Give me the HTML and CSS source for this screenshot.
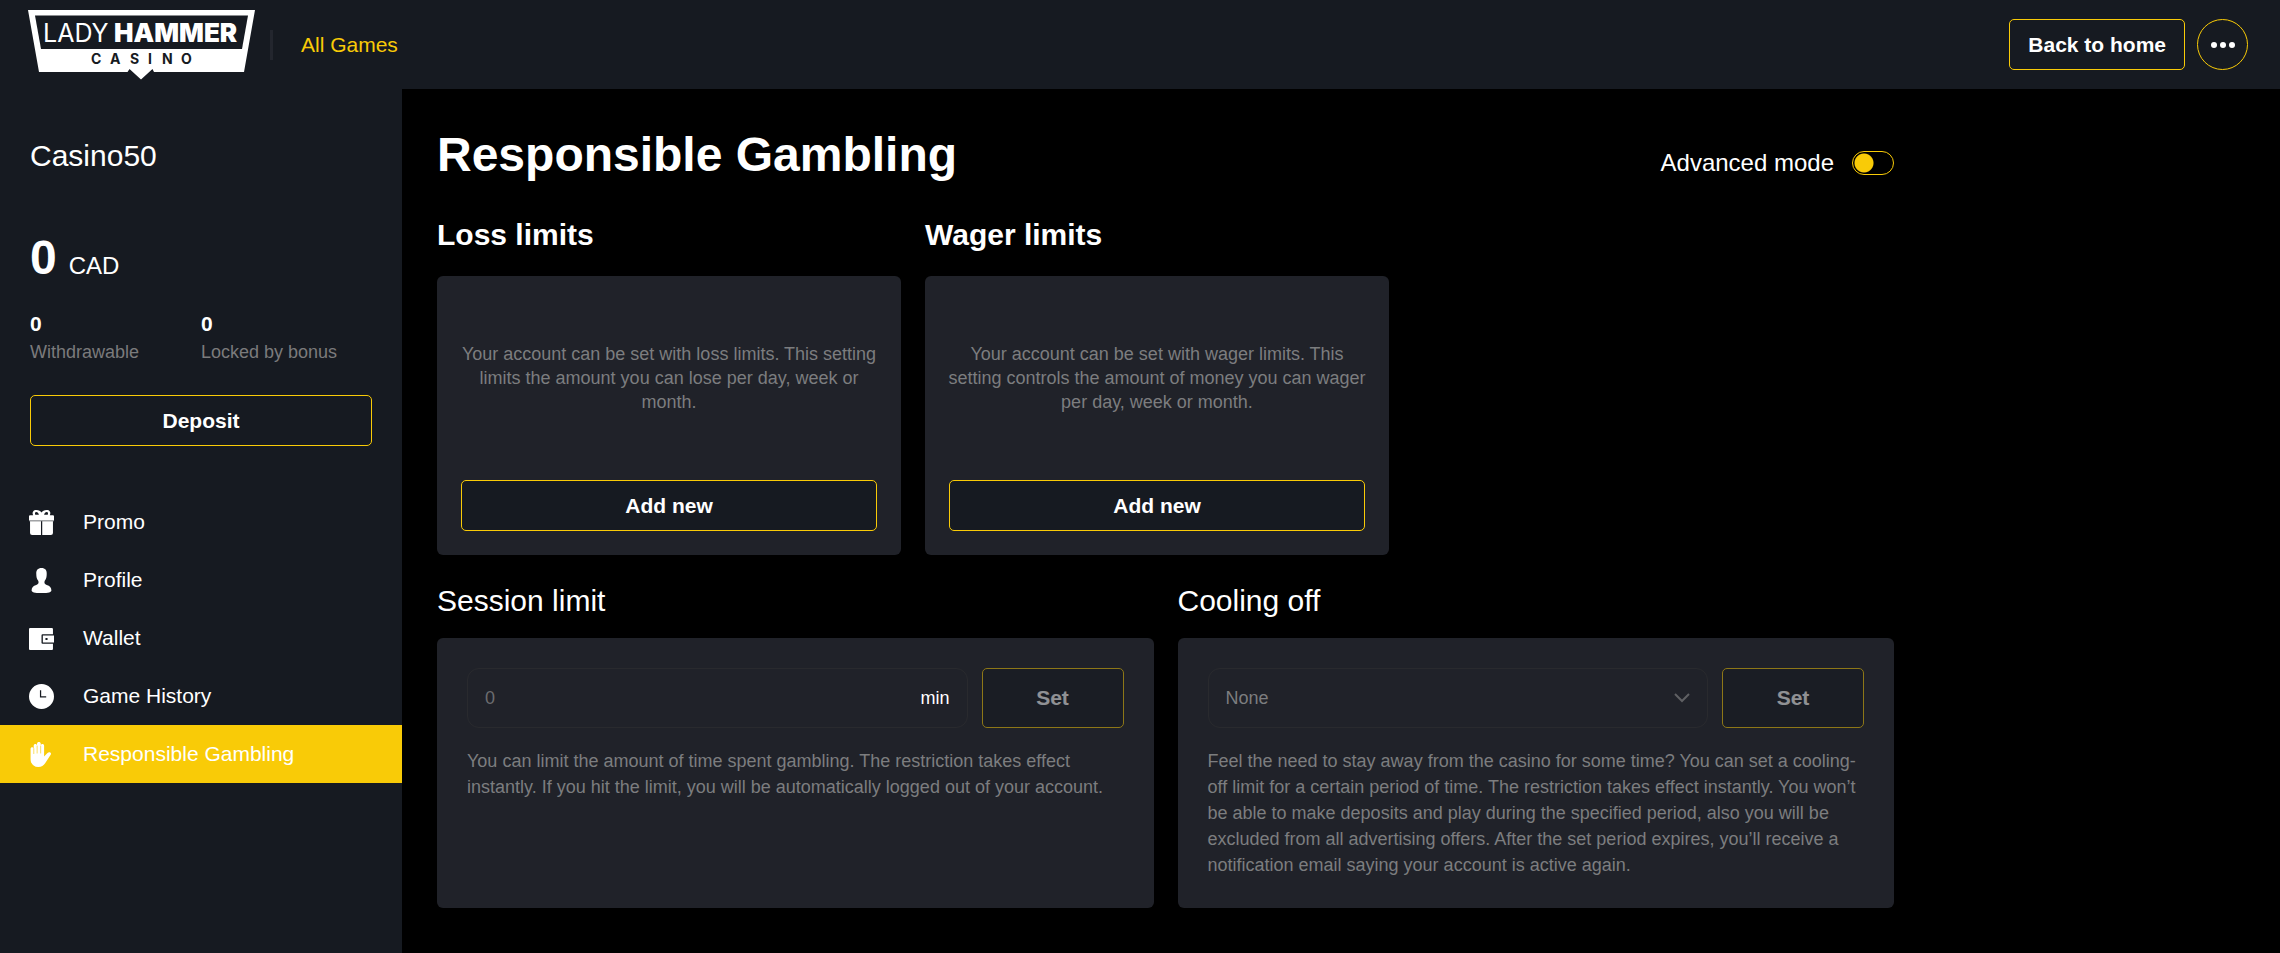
FILE: index.html
```html
<!DOCTYPE html>
<html lang="en">
<head>
  <meta charset="UTF-8">
  <title>Responsible Gambling – Lady Hammer Casino</title>
  <meta name="viewport" content="width=device-width, initial-scale=1.0">
  <link rel="stylesheet" href="styles.css">
</head>
<body>

  <!-- Header -->
  <header class="header">
    <a href="#" class="logo" aria-label="Lady Hammer Casino">
      <svg width="227" height="70" viewBox="0 0 227 70">
        <path fill="#fff" d="M0 0H227L216 62H126L124.500 59L113 69.500L101.500 59L99.500 62H11Z"/>
        <path fill="#161a21" d="M7 5.500H220L214 39H13Z"/>
        <text class="logo-light" x="15" y="32">LADY</text>
        <text class="logo-bold" x="86" y="32">HAMMER</text>
        <text class="logo-sub" x="63" y="54">C</text>
        <text class="logo-sub" x="82" y="54">A</text>
        <text class="logo-sub" x="102" y="54">S</text>
        <text class="logo-sub" x="120" y="54">I</text>
        <text class="logo-sub" x="134" y="54">N</text>
        <text class="logo-sub" x="153" y="54">O</text>
      </svg>
    </a>
    <nav class="top-nav">
      <a href="#">All Games</a>
    </nav>
    <div class="header-actions">
      <button class="btn" type="button">Back to home</button>
      <button class="btn btn-round" type="button" aria-label="More">
        <svg width="24" height="6" viewBox="0 0 24 6" fill="#fff">
          <circle cx="3" cy="3" r="3"/><circle cx="12" cy="3" r="3"/><circle cx="21" cy="3" r="3"/>
        </svg>
      </button>
    </div>
  </header>

  <div class="layout">

    <!-- Sidebar -->
    <aside class="sidebar">
      <div class="account">
        <div class="username">Casino50</div>
        <div class="balance"><strong>0</strong><span>CAD</span></div>
        <div class="funds">
          <div><strong>0</strong><span>Withdrawable</span></div>
          <div><strong>0</strong><span>Locked by bonus</span></div>
        </div>
        <button class="btn btn-block" type="button">Deposit</button>
      </div>

      <nav class="menu">
        <a href="#">
          <svg viewBox="0 0 24 24"><path d="M1 5H4C2.500 2 4.500 0 7 0C9.500 0 11 1 12 2.500C13 1 14.500 0 17 0C19.500 0 21.500 2 20 5H23A1 1 0 0 1 24 6V9.500H0V6A1 1 0 0 1 1 5ZM6 4.500H9.500C9 2.800 8.300 2 7 2C5.700 2 5.500 3.300 6 4.500ZM18 4.500C18.500 3.300 18.300 2 17 2C15.700 2 15 2.800 14.500 4.500Z" fill-rule="evenodd"/><path d="M0 9.500H24V10.800H0Z" opacity=".6"/><path d="M1 10.800H11.500V24H3A2 2 0 0 1 1 22ZM12.700 10.800H23V22A2 2 0 0 1 21 24H12.700Z"/></svg>
          Promo
        </a>
        <a href="#">
          <svg viewBox="0 0 24 24"><path d="M12 0C15.500 0 17.300 2.200 17 5.800C17 8.500 16.500 10.800 15 12.500C14.500 14.500 15 15.500 17 16.200C20 17.200 21.500 18.500 21.500 21.500C21.500 23 19 24 12 24C5 24 2.500 23 2.500 21.500C2.500 18.500 4 17.200 7 16.200C9 15.500 9.500 14.500 9 12.500C7.500 10.800 7 8.500 7 5.800C6.700 2.200 8.500 0 12 0Z"/></svg>
          Profile
        </a>
        <a href="#">
          <svg viewBox="0 0 24 24"><path d="M1 2H22A1 1 0 0 1 23 3V8H13A1 1 0 0 0 12 9V16A1 1 0 0 0 13 17H23V22A1 1 0 0 1 22 23H1A1 1 0 0 1 0 22V3A1 1 0 0 1 1 2ZM13.300 9.200H24V15.800H13.300ZM15.800 11.500V13.500H17.800V11.500Z" fill-rule="evenodd"/></svg>
          Wallet
        </a>
        <a href="#">
          <svg viewBox="0 0 24 24"><path d="M12 0A12 12 0 1 1 12 24A12 12 0 1 1 12 0ZM10.500 6V13H16.500V11.800H11.700V6Z" fill-rule="evenodd"/></svg>
          Game History
        </a>
        <a href="#" class="active">
          <svg viewBox="0 0 24 24"><path d="M1.500 6.500C1.500 4.500 4.300 4.500 4.500 6.500V3.500C4.500 1.300 7.700 1.300 7.700 3.500V1.800C7.700-.6 11.300-.6 11.300 1.800V3.500C11.300 1.500 14.500 1.500 14.500 3.500V14L17.500 10.800C19.500 9 22 10.300 20.800 12.300L15.500 20.500C14 22.800 12 24 9 24C4 24 1.500 20.500 1.500 16Z"/><path d="M4.600 6V11.500M7.800 3.500V11M11.200 3.500V11" fill="none" stroke="#f9cb07" stroke-width=".6"/></svg>
          Responsible Gambling
        </a>
      </nav>
    </aside>

    <!-- Content -->
    <main class="content">
      <div class="page-head">
        <h1>Responsible Gambling</h1>
        <label class="switch">
          Advanced mode
          <input type="checkbox" role="switch">
        </label>
      </div>

      <div class="limits">
        <section>
          <h2>Loss limits</h2>
          <div class="card limit-card">
            <p>Your account can be set with loss limits. This setting limits the amount you can lose per day, week or month.</p>
            <button class="btn btn-block" type="button">Add new</button>
          </div>
        </section>
        <section>
          <h2>Wager limits</h2>
          <div class="card limit-card">
            <p>Your account can be set with wager limits. This setting controls the amount of money you can wager per day, week or month.</p>
            <button class="btn btn-block" type="button">Add new</button>
          </div>
        </section>
      </div>

      <div class="restrictions">
        <section>
          <h2 id="session-title">Session limit</h2>
          <form class="card">
            <div class="form-row">
              <div class="field">
                <input type="text" placeholder="0" aria-labelledby="session-title">
                <span>min</span>
              </div>
              <button class="btn" type="submit" disabled>Set</button>
            </div>
            <p>You can limit the amount of time spent gambling. The restriction takes effect instantly. If you hit the limit, you will be automatically logged out of your account.</p>
          </form>
        </section>
        <section>
          <h2 id="cooling-title">Cooling off</h2>
          <form class="card">
            <div class="form-row">
              <div class="field">
                <select aria-labelledby="cooling-title">
                  <option>None</option>
                </select>
                <svg width="16" height="10" viewBox="0 0 16 10"><path d="M1 1L8 8L15 1" fill="none" stroke="#5f6063" stroke-width="2"/></svg>
              </div>
              <button class="btn" type="submit" disabled>Set</button>
            </div>
            <p>Feel the need to stay away from the casino for some time? You can set a cooling-off limit for a certain period of time. The restriction takes effect instantly. You won’t be able to make deposits and play during the specified period, also you will be excluded from all advertising offers. After the set period expires, you’ll receive a notification email saying your account is active again.</p>
          </form>
        </section>
      </div>
    </main>

  </div>

</body>
</html>
```
FILE: styles.css
```css
* { box-sizing: border-box; }

body {
  margin: 0;
  min-height: 100vh;
  display: flex;
  flex-direction: column;
  background: #000;
  color: #fff;
  font-family: Arial, "Liberation Sans", sans-serif;
  font-size: 18px;
  line-height: 24px;
}

a { color: inherit; text-decoration: none; }
h1, h2, p { margin: 0; }

/* Buttons */
.btn {
  height: 51px;
  padding: 0 18px;
  background: #161a21;
  color: #fff;
  border: 1px solid #f9cb07;
  border-radius: 5px;
  font-family: inherit;
  font-size: 21px;
  font-weight: bold;
  cursor: pointer;
}
.btn:disabled { opacity: 0.5; cursor: default; }
.btn-block { display: block; width: 100%; }
.btn-round {
  display: flex;
  align-items: center;
  justify-content: center;
  width: 51px;
  padding: 0;
  border-radius: 50%;
}

/* Header */
.header {
  display: flex;
  align-items: center;
  height: 89px;
  padding: 0 32px 0 28px;
  background: #161a21;
}
.logo svg { display: block; }
.logo-light { font: 25px Inter, sans-serif; fill: #fff; }
.logo-bold { font: 900 26px Inter, sans-serif; fill: #fff; }
.logo-sub { font: bold 14px Inter, sans-serif; fill: #161a21; }

.top-nav {
  margin-left: 15px;
  padding-left: 28px;
  border-left: 3px solid #23262e;
  color: #f9cb07;
  font-size: 21px;
  line-height: 30px;
}
.header-actions { display: flex; gap: 12px; margin-left: auto; }

.layout { display: flex; flex: 1; }

/* Sidebar */
.sidebar {
  flex: 0 0 402px;
  background: #161a21;
}
.account { padding: 49px 30px 0; }
.username { font-size: 30px; line-height: 36px; }
.balance { margin-top: 56px; font-size: 24px; line-height: 56px; }
.balance strong { margin-right: 12px; font-size: 48px; }
.funds {
  display: grid;
  grid-template-columns: 1fr 1fr;
  margin: 16px 0 29px;
}
.funds strong { display: block; font-size: 21px; line-height: 28px; }
.funds span { display: block; color: #7b7b7c; line-height: 28px; }

.menu { margin-top: 47px; }
.menu a {
  display: flex;
  align-items: center;
  gap: 29px;
  height: 58px;
  padding: 0 29px;
  font-size: 21px;
}
.menu svg { width: 25px; height: 25px; fill: currentColor; }
.menu .active { background: #f9cb07; }

/* Content */
.content {
  flex: 1;
  max-width: 1527px;
  padding: 36px 35px 40px;
}
.page-head {
  display: flex;
  align-items: flex-end;
  justify-content: space-between;
}
h1 { font-size: 48px; line-height: 60px; }
h2 { font-size: 30px; line-height: 36px; }

.switch {
  display: flex;
  align-items: center;
  gap: 18px;
  margin-bottom: 7px;
  font-size: 24px;
  line-height: 30px;
}
.switch input {
  appearance: none;
  width: 42px;
  height: 24px;
  margin: 0;
  border: 1px solid #f9cb07;
  border-radius: 12px;
  background: radial-gradient(circle at 11px 11px, #f9cb07 9px, transparent 10px);
}
.switch input:checked { background-position: 18px 0; }

.card {
  background: #202229;
  border-radius: 6px;
  color: #7c7d7f;
}

.limits {
  display: flex;
  flex-wrap: wrap;
  gap: 24px;
  margin-top: 32px;
}
.limits section { flex: 0 1 464px; }
.limits .card { margin-top: 23px; }
.limit-card { padding: 24px; text-align: center; }
.limit-card p {
  display: flex;
  align-items: center;
  min-height: 156px;
  margin: 0 -4px 24px;
}

.restrictions {
  display: grid;
  grid-template-columns: 1fr 1fr;
  gap: 24px;
  margin-top: 28px;
}
.restrictions section { display: flex; flex-direction: column; }
.restrictions h2 { font-weight: normal; }
.restrictions .card {
  flex: 1;
  margin-top: 19px;
  padding: 30px;
  line-height: 26px;
}

.form-row {
  display: flex;
  gap: 14px;
  height: 60px;
  margin-bottom: 20px;
}
.form-row .btn { width: 142px; height: 60px; }
.field {
  display: flex;
  flex: 1;
  align-items: center;
  padding: 0 17px;
  border: 1px solid #292a2e;
  border-radius: 12px;
}
.field input,
.field select {
  flex: 1;
  min-width: 0;
  height: 100%;
  padding: 0;
  background: none;
  border: 0;
  outline: 0;
  appearance: none;
  color: #7c7d7f;
  font: inherit;
}
.field input::placeholder { color: #6b6c6f; }
.field span { color: #fff; }
```
